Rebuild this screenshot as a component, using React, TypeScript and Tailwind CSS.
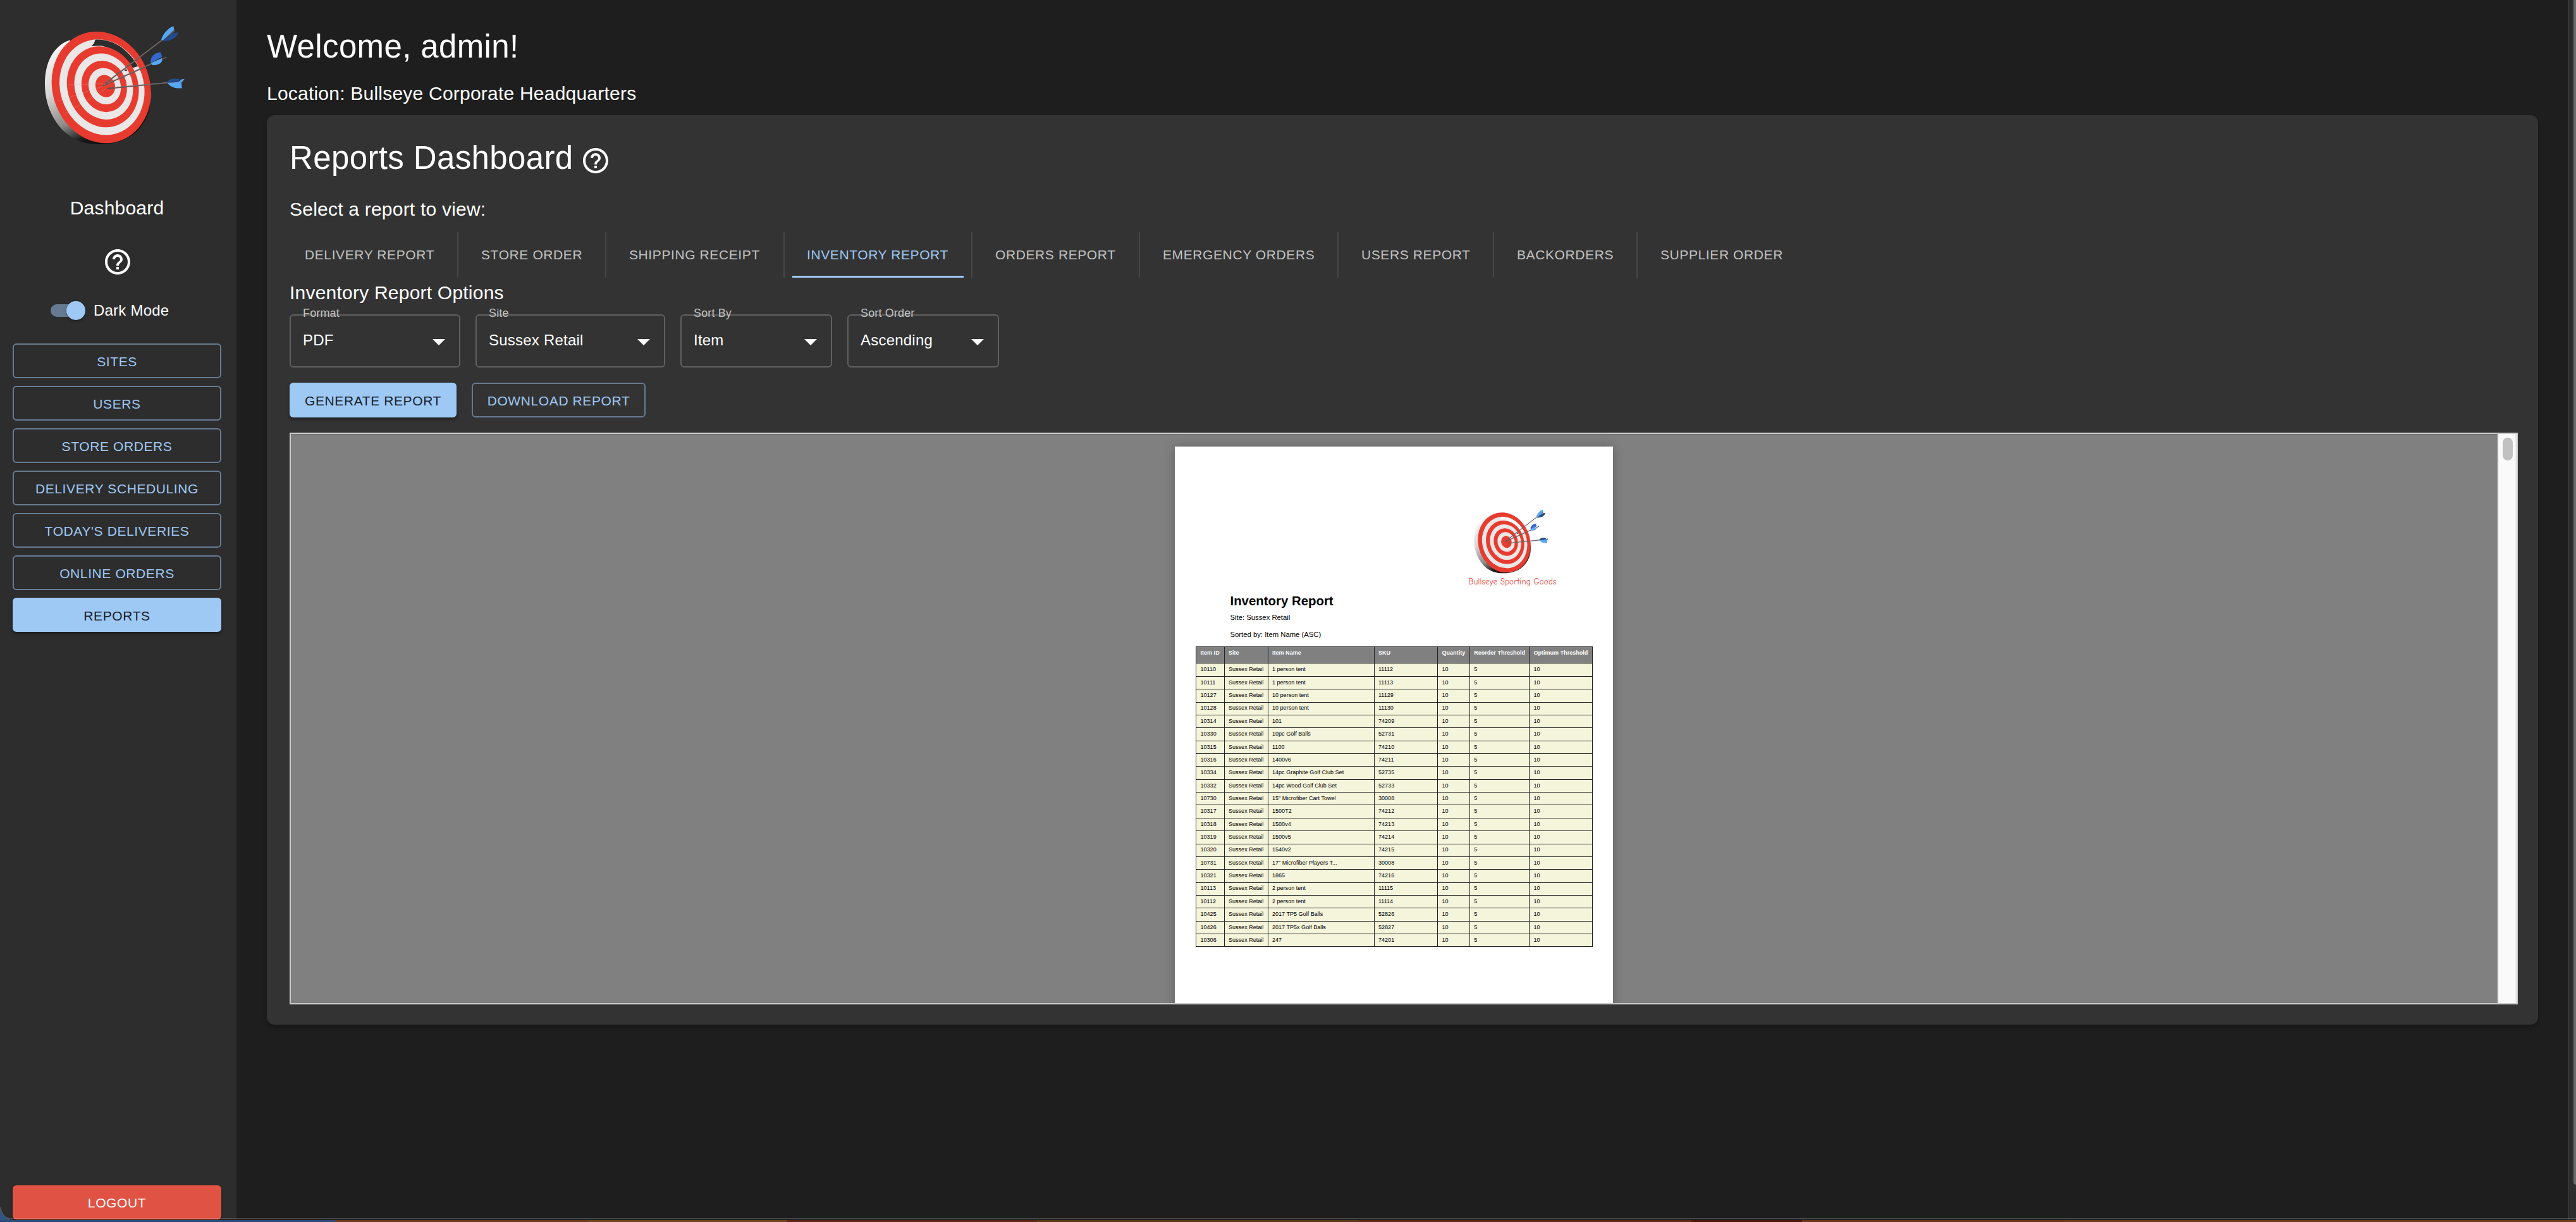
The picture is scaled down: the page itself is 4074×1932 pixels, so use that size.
import React from "react";

const NAV = [
  "SITES",
  "USERS",
  "STORE ORDERS",
  "DELIVERY SCHEDULING",
  "TODAY'S DELIVERIES",
  "ONLINE ORDERS",
];

const TABS = [
  { label: "DELIVERY REPORT", cls: "w-[267px] pl-6 border-r-2" },
  { label: "STORE ORDER", cls: "w-[234px] pl-9 border-r-2" },
  { label: "SHIPPING RECEIPT", cls: "w-[282px] pl-9 border-r-2" },
  { label: "INVENTORY REPORT", cls: "w-[297px] px-3 border-r-2", active: true },
  { label: "ORDERS REPORT", cls: "w-[265px] pl-9 border-r-2" },
  { label: "EMERGENCY ORDERS", cls: "w-[314px] pl-9 border-r-2" },
  { label: "USERS REPORT", cls: "w-[246px] pl-9 border-r-2" },
  { label: "BACKORDERS", cls: "w-[227px] pl-9 border-r-2" },
  { label: "SUPPLIER ORDER", cls: "pl-9" },
];

const SELECTS = [
  { label: "Format", value: "PDF", cls: "w-[270px]" },
  { label: "Site", value: "Sussex Retail", cls: "w-[300px]" },
  { label: "Sort By", value: "Item", cls: "w-[240px]" },
  { label: "Sort Order", value: "Ascending", cls: "w-[240px]" },
];

const ROWS: [string, string, string][] = [
  ["10110", "1 person tent", "11112"],
  ["10111", "1 person tent", "11113"],
  ["10127", "10 person tent", "11129"],
  ["10128", "10 person tent", "11130"],
  ["10314", "101", "74209"],
  ["10330", "10pc Golf Balls", "52731"],
  ["10315", "1100", "74210"],
  ["10316", "1400v6", "74211"],
  ["10334", "14pc Graphite Golf Club Set", "52735"],
  ["10332", "14pc Wood Golf Club Set", "52733"],
  ["10730", '15" Microfiber Cart Towel', "30008"],
  ["10317", "1500T2", "74212"],
  ["10318", "1500v4", "74213"],
  ["10319", "1500v5", "74214"],
  ["10320", "1540v2", "74215"],
  ["10731", '17" Microfiber Players T...', "30008"],
  ["10321", "1865", "74216"],
  ["10113", "2 person tent", "11115"],
  ["10112", "2 person tent", "11114"],
  ["10425", "2017 TP5 Golf Balls", "52826"],
  ["10426", "2017 TP5x Golf Balls", "52827"],
  ["10306", "247", "74201"],
];

const HEADERS = ["Item ID", "Site", "Item Name", "SKU", "Quantity", "Reorder Threshold", "Optimum Threshold"];

const GRID = "grid grid-cols-[44.5px_69px_168px_100.5px_50.7px_94.2px_99.8px]";

const RINGS = [
  { cx: 480.5, cy: 400, s: 1, fill: "#e83b2f" },
  { cx: 484, cy: 399, s: 0.857, fill: "#ebe7e6" },
  { cx: 488, cy: 397.5, s: 0.7255, fill: "#e83b2f" },
  { cx: 492, cy: 396, s: 0.592, fill: "#ebe7e6" },
  { cx: 494.5, cy: 395.5, s: 0.46, fill: "#e83b2f" },
  { cx: 497, cy: 394.5, s: 0.327, fill: "#ebe7e6" },
  { cx: 499.5, cy: 394, s: 0.199, fill: "#e83b2f" },
];

function Bullseye({ className, gap, id }: { className: string; gap: string; id: string }) {
  return (
    <svg viewBox="210 115 670 550" preserveAspectRatio="none" className={className}>
      <defs>
        <linearGradient id={id} x1="0" y1="0" x2="0.45" y2="1">
          <stop offset="0" stopColor="#ffffff" />
          <stop offset="0.45" stopColor="#d8d6d4" />
          <stop offset="0.75" stopColor="#8b8a89" />
          <stop offset="0.92" stopColor="#1c1c1c" />
          <stop offset="1" stopColor="#111111" />
        </linearGradient>
      </defs>
      <path
        d="M330 183C250 210 213 290 213 385C213 520 300 645 430 659C520 668 610 650 665 585C700 545 722 490 717 420L480 400Z"
        fill={`url(#${id})`}
      />
      {RINGS.slice(0, 2).map((r) => (
        <ellipse key={r.s} cx={r.cx} cy={r.cy} rx={261 * r.s} ry={230 * r.s} fill={r.fill} transform={`rotate(66 ${r.cx} ${r.cy})`} />
      ))}
      <path d="M452 181C545 176 615 235 655 303L630 310C600 270 560 225 480 209L434 211L446 198Z" fill={gap} />
      {RINGS.slice(2).map((r) => (
        <ellipse key={r.s} cx={r.cx} cy={r.cy} rx={261 * r.s} ry={230 * r.s} fill={r.fill} transform={`rotate(66 ${r.cx} ${r.cy})`} />
      ))}
      <g stroke="#cfc9c8" strokeWidth="1.5" opacity="0.5">
        <path d="M490 382L300 390M490 395L275 462M500 408L310 522" />
      </g>
      <ellipse cx="597" cy="321" rx="6" ry="4" fill="#333" />
      <g stroke="#5c5251" strokeWidth="6" strokeLinecap="round">
        <path d="M500 381L828 140M490 392L788 262M511 405L868 372" />
      </g>
      <g stroke="#a29997" strokeWidth="1.5">
        <path d="M502 378L770 181M492 389L750 276M540 401L860 372" />
      </g>
      <path d="M765 181C772 155 800 124 824 119L826 136L774 183Z" fill="#56a8f5" />
      <path d="M770 186L822 150L846 148C843 170 810 190 772 188Z" fill="#234a8c" />
      <path d="M715 284C712 262 732 240 762 239L769 260L718 286Z" fill="#3568cc" />
      <path d="M717 288L768 266C774 284 758 298 722 298Z" fill="#56a8f5" />
      <path d="M791 378C800 360 828 355 852 363L848 376Z" fill="#234a8c" />
      <path d="M795 381L852 375L858 364L876 361L861 377L863 404C835 405 812 402 795 381Z" fill="#56a8f5" />
    </svg>
  );
}

function Help() {
  return (
    <svg viewBox="0 0 24 24" className="size-12 shrink-0 fill-white">
      <path d="M11 18h2v-2h-2zm1-16C6.480 2 2 6.480 2 12s4.480 10 10 10 10-4.480 10-10S17.520 2 12 2m0 18c-4.410 0-8-3.590-8-8s3.590-8 8-8 8 3.590 8 8-3.590 8-8 8m0-14c-2.210 0-4 1.790-4 4h2c0-1.100.9-2 2-2s2 .9 2 2c0 2-3 1.750-3 5h2c0-2.250 3-2.500 3-5 0-2.210-1.790-4-4-4" />
    </svg>
  );
}

function Sidebar() {
  return (
    <aside className="flex h-full w-[374px] shrink-0 flex-col bg-[#2d2d2d] pl-5 pr-6">
      <Bullseye className="ml-[50px] mt-[39.600px] h-[189.400px] w-[223.300px] shrink-0" gap="#2d2d2d" id="rim-side" />
      <h2 className="mt-[76.500px] text-center text-[30px] leading-[48px] tracking-[0.220px]">Dashboard</h2>
      <div className="mt-[36.500px] flex justify-center pl-[2px]">
        <Help />
      </div>
      <div className="mt-[34.700px] flex h-9 items-center pl-[60px]">
        <div className="flex h-5 w-[51px] items-center rounded-full bg-[#667b92]">
          <span className="ml-[25px] size-[30px] shrink-0 rounded-full bg-[#9fc9f5] shadow-[0_2px_4px_rgba(0,0,0,0.35)]" />
        </div>
        <span className="ml-[17px] text-2xl leading-9 tracking-[0.220px]">Dark Mode</span>
      </div>
      <nav className="mt-[34.800px] flex flex-col gap-3 text-[21px] tracking-[0.600px]">
        {NAV.map((n) => (
          <button key={n} className="flex h-[55px] items-center justify-center rounded-md border-2 border-[#667b92] pt-[2px] text-[#9fc9f5]">
            {n}
          </button>
        ))}
        <button className="flex h-[54px] items-center justify-center rounded-md bg-[#9fc9f5] pt-[2px] text-[#18212a] shadow-[0_3px_5px_rgba(0,0,0,0.4)]">
          REPORTS
        </button>
      </nav>
      <button className="mb-1 mt-auto flex h-[54px] shrink-0 items-center justify-center rounded-md bg-[#e05243] pt-[2px] text-[21px] tracking-[0.600px] shadow-[0_3px_5px_rgba(0,0,0,0.4)]">
        LOGOUT
      </button>
    </aside>
  );
}

function ReportPage() {
  return (
    <div className="h-[920px] w-[693px] shrink-0 bg-white pl-[33px] pt-[99px] text-black shadow-[0_0_16px_rgba(0,0,0,0.25)]">
      <div className="ml-[428.500px] flex w-[145px] flex-col items-center">
        <Bullseye className="mr-[3px] h-[102px] w-[119px]" gap="#f8f8f8" id="rim-page" />
        <p className="mt-[2.500px] whitespace-nowrap font-['Comic_Neue','Comic_Sans_MS','Lato',sans-serif] text-[13px] leading-5 tracking-[0.160px] text-[#ea4a42]">
          Bullseye Sporting Goods
        </p>
      </div>
      <h3 className="ml-[54.500px] mt-[8.500px] text-[20.400px] font-bold leading-[24px]">Inventory Report</h3>
      <p className="ml-[54.500px] mt-[0.700px] text-[11.300px] leading-[27px]">Site: Sussex Retail</p>
      <p className="ml-[54.500px] text-[11.300px] leading-[27px]">Sorted by: Item Name (ASC)</p>
      <div className="mt-[5.300px] w-[627.700px] border-l border-t border-[#222] text-[9.060px]">
        <div className={`${GRID} h-[26.400px] bg-[#808080] font-bold leading-[19px] text-white`}>
          {HEADERS.map((h) => (
            <div key={h} className="whitespace-nowrap border-b border-r border-[#222] pl-[6.500px]">
              {h}
            </div>
          ))}
        </div>
        {ROWS.map(([id, name, sku]) => (
          <div key={id} className={`${GRID} h-[20.370px] bg-[#f5f5dc] leading-[19.500px]`}>
            {[id, "Sussex Retail", name, sku, "10", "5", "10"].map((c, i) => (
              <div key={i} className="whitespace-nowrap border-b border-r border-[#222] pl-[6.500px]">
                {c}
              </div>
            ))}
          </div>
        ))}
      </div>
    </div>
  );
}

export default function App() {
  return (
    <div className="relative flex h-[1932px] w-[4074px] overflow-hidden bg-[#1e1e1e] font-['Liberation_Sans',Arial,sans-serif] text-white">
      <Sidebar />
      <main className="flex min-w-0 flex-1 flex-col px-12 pt-11">
        <h1 className="text-[51px] leading-[60px] tracking-[0.370px]">Welcome, admin!</h1>
        <p className="mt-5 text-[30px] leading-[48px] tracking-[0.220px]">Location: Bullseye Corporate Headquarters</p>
        <section className="mt-[10px] h-[1438px] rounded-xl bg-[#333333] pl-9 pr-8 pt-[38px] shadow-[0_3px_6px_rgba(0,0,0,0.3)]">
          <div className="flex h-[60px] items-center">
            <h1 className="text-[51px] leading-[60px] tracking-[0.370px]">Reports Dashboard</h1>
            <div className="ml-[11px] mt-2">
              <Help />
            </div>
          </div>
          <p className="mt-[27px] text-[30px] leading-[48px] tracking-[0.220px]">Select a report to view:</p>
          <div className="mt-3 flex h-[72px] text-[21px] tracking-[0.600px] text-[#c2c2c2]">
            {TABS.map((t) => (
              <div key={t.label} className={`${t.cls} flex shrink-0 whitespace-nowrap border-[#474747] leading-[72px]`}>
                {t.active ? (
                  <span className="flex-1 border-b-[3px] border-[#9fc9f5] pl-[23px] text-[#9fc9f5]">{t.label}</span>
                ) : (
                  <span>{t.label}</span>
                )}
              </div>
            ))}
          </div>
          <h2 className="text-[30px] leading-[48px] tracking-[0.220px]">Inventory Report Options</h2>
          <div className="mt-[10px] flex gap-6">
            {SELECTS.map((s) => (
              <div key={s.label} className={`${s.cls} relative flex h-[84px] items-center justify-between rounded-md border-2 border-[#606060] pl-[19px] pr-[8px]`}>
                <span className="absolute -top-[16px] left-[19px] text-lg leading-6 tracking-[0.140px] text-[#c2c2c2]">{s.label}</span>
                <span className="mb-[2px] text-2xl leading-9 tracking-[0.220px]">{s.value}</span>
                <svg viewBox="0 0 24 24" className="mt-[2px] size-12 fill-white">
                  <path d="m7 10 5 5 5-5z" />
                </svg>
              </div>
            ))}
          </div>
          <div className="mt-6 flex gap-6 text-[21px] tracking-[0.600px]">
            <button className="h-[55px] w-[264px] rounded-md bg-[#9fc9f5] pt-[2px] text-[#18212a] shadow-[0_3px_5px_rgba(0,0,0,0.4)]">GENERATE REPORT</button>
            <button className="h-[55px] w-[275px] rounded-md border-2 border-[#667b92] pt-[2px] text-[#9fc9f5]">DOWNLOAD REPORT</button>
          </div>
          <div className="mt-6 flex h-[904px] overflow-hidden border-2 border-[#cccccc] bg-[#808080]">
            <div className="flex h-full flex-1 justify-center overflow-hidden border-t border-[#6c6c6c] pr-px pt-[19px]">
              <ReportPage />
            </div>
            <div className="flex h-full w-[30px] justify-center border-x-2 border-[#eeeeee] bg-[#fafafa] pl-[2px] pt-[6px]">
              <div className="h-9 w-4 rounded-full bg-[#c1c1c1]" />
            </div>
          </div>
        </section>
      </main>
      <div className="flex h-full w-3 shrink-0 justify-end border-l border-[#444] bg-[#2d2d2d]">
        <div className="h-[1873px] w-1 rounded-bl-md bg-[#6b6b6b]" />
      </div>
      <div className="absolute bottom-[3px] left-0 size-5 bg-[radial-gradient(circle_at_top_right,transparent_18px,#555_18px,#555_19px,#2f5486_20px)]" />
      <div className="absolute inset-x-0 bottom-0 flex flex-col">
        <div className="ml-4 h-[2px] bg-white/20" />
        <div className="ml-4 h-px bg-black" />
        <div className="flex h-[3px]">
          <div className="w-[530px] bg-[#2b4a78]" />
          <div className="w-[400px] bg-[#6b3a1c]" />
          <div className="w-[315px] bg-[#6a451c]" />
          <div className="w-[395px] bg-[#5c2416]" />
          <div className="w-[510px] bg-[#553815]" />
          <div className="w-[525px] bg-[#5c2614]" />
          <div className="w-[175px] bg-[#4c170c]" />
          <div className="w-[418px] bg-[#6a3517]" />
          <div className="flex-1 bg-[#6a3c1a]" />
        </div>
      </div>
    </div>
  );
}
